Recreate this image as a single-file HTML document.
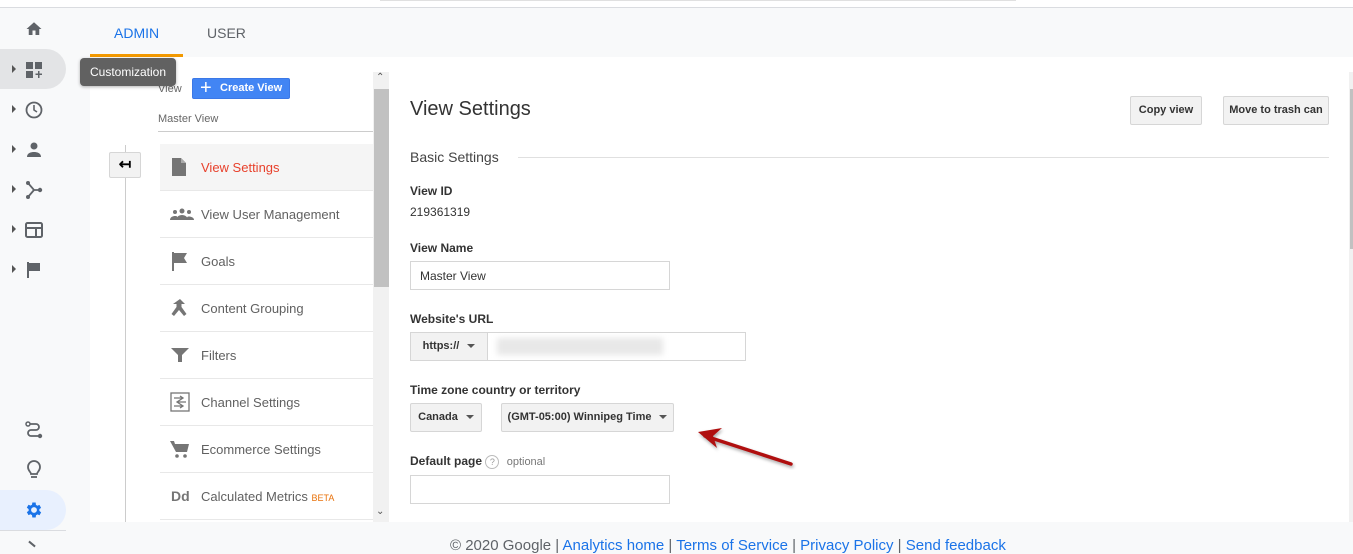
<!DOCTYPE html>
<html><head><meta charset="utf-8"><style>
*{box-sizing:border-box;margin:0;padding:0}
body{width:1353px;height:551px;overflow:hidden;background:#f8f9fa;font-family:"Liberation Sans",Arial,sans-serif;position:relative;color:#333}
.a{position:absolute}
.item{position:absolute;left:160px;width:213px;height:47px;border-bottom:1px solid #e8e8e8;font-size:13px;color:#616161}
.item span{position:absolute;left:41px;top:16px}
.item svg{position:absolute;left:10px;top:13px}
.lbl{position:absolute;left:410px;font-size:12px;font-weight:bold;color:#333}
.inp{position:absolute;background:#fff;border:1px solid #d6d6d6}
.btn{position:absolute;background:#f2f2f2;border:1px solid #d6d6d6;border-radius:2px;font-size:11px;font-weight:bold;color:#333;text-align:center}
.dd{display:inline-block;width:0;height:0;border-left:4px solid transparent;border-right:4px solid transparent;border-top:4px solid #555;vertical-align:middle;margin-left:8px}
.tri{position:absolute;left:12px;width:0;height:0;border-top:4px solid transparent;border-bottom:4px solid transparent;border-left:4px solid #555}
.ic{position:absolute;left:24px}
</style></head><body>
<div class="a" style="left:0;top:0;width:1353px;height:8px;background:#fff;border-bottom:1px solid #dadce0"></div>
<div class="a" style="left:380px;top:0;width:636px;height:1px;background:#e0e0e0"></div>

<div class="a" style="left:0;top:49px;width:66px;height:40px;background:#e3e4e6;border-radius:0 20px 20px 0"></div>
<div class="a" style="left:0;top:490px;width:66px;height:40px;background:#e8f0fe;border-radius:0 20px 20px 0"></div>
<div class="a" style="left:0;top:530px;width:66px;height:1px;background:#dadce0"></div>
<svg class="ic" style="top:20px" width="20" height="18" viewBox="0 0 24 24"><path d="M10 20v-6h4v6h5v-8h3L12 3 2 12h3v8z" fill="#5f6368"/></svg>
<div class="tri" style="top:65px"></div>
<svg class="ic" style="top:60px" width="20" height="20" viewBox="0 0 20 20" fill="#5f6368"><rect x="2" y="2" width="7" height="7"/><rect x="11" y="2" width="7" height="7"/><rect x="2" y="11" width="7" height="7"/><path d="M14 11h1.5v2.5H18V15h-2.5v3H14v-3h-2.5v-1.5H14z"/></svg>
<div class="tri" style="top:105px"></div>
<svg class="ic" style="top:100px" width="20" height="20" viewBox="0 0 20 20"><circle cx="10" cy="10" r="7.5" fill="none" stroke="#5f6368" stroke-width="1.8"/><path d="M10 5v5l3 2" fill="none" stroke="#5f6368" stroke-width="1.6"/></svg>
<div class="tri" style="top:145px"></div>
<svg class="ic" style="top:140px" width="20" height="20" viewBox="0 0 20 20" fill="#5f6368"><circle cx="10" cy="6" r="3.5"/><path d="M3 17c0-4 4-5 7-5s7 1 7 5z"/></svg>
<div class="tri" style="top:185px"></div>
<svg class="ic" style="top:180px" width="20" height="20" viewBox="0 0 20 20" fill="#5f6368"><circle cx="4" cy="3" r="2"/><circle cx="4" cy="17" r="2"/><circle cx="16" cy="10" r="2.2"/><path d="M4 3l6 7h6M10 10l-6 7" stroke="#5f6368" stroke-width="1.8" fill="none"/></svg>
<div class="tri" style="top:225px"></div>
<svg class="ic" style="top:220px" width="20" height="20" viewBox="0 0 20 20"><rect x="2" y="3" width="16" height="14" rx="1.5" fill="none" stroke="#5f6368" stroke-width="2"/><path d="M2 8h16M12 8v9" stroke="#5f6368" stroke-width="2"/></svg>
<div class="tri" style="top:265px"></div>
<svg class="ic" style="top:260px" width="20" height="20" viewBox="0 0 20 20" fill="#5f6368"><path d="M3 2h2v16H3zM5 3h11v8H5z"/></svg>
<svg class="ic" style="top:420px" width="20" height="20" viewBox="0 0 20 20"><circle cx="4" cy="4" r="2" fill="none" stroke="#5f6368" stroke-width="1.5"/><circle cx="16" cy="16" r="2.2" fill="#5f6368"/><path d="M6 4h6a3 3 0 0 1 0 6H7a3 3 0 0 0 0 6h7" fill="none" stroke="#5f6368" stroke-width="1.8"/></svg>
<svg class="ic" style="top:460px" width="20" height="20" viewBox="0 0 20 20"><path d="M7 14c0-2-3-3-3-7a6 6 0 0 1 12 0c0 4-3 5-3 7z" fill="none" stroke="#5f6368" stroke-width="1.8"/><path d="M7 17h6" stroke="#5f6368" stroke-width="1.8"/></svg>
<svg class="ic" style="top:500px" width="20" height="20" viewBox="0 0 24 24"><path fill="#1a73e8" d="M19.4 13a7.5 7.5 0 0 0 0-2l2.1-1.6-2-3.5-2.5 1a7 7 0 0 0-1.7-1L15 3h-4l-.4 2.7a7 7 0 0 0-1.7 1l-2.5-1-2 3.5L6.6 11a7.5 7.5 0 0 0 0 2l-2.2 1.6 2 3.5 2.5-1a7 7 0 0 0 1.7 1L11 21h4l.4-2.7a7 7 0 0 0 1.7-1l2.5 1 2-3.5zM13 15.5a3.5 3.5 0 1 1 0-7 3.5 3.5 0 0 1 0 7z" transform="translate(-1 0)"/></svg>
<div class="a" style="left:28px;top:543px;width:8px;height:2px;background:#5f6368;transform:rotate(40deg)"></div>

<div class="a" style="left:114px;top:25px;font-size:14px;color:#1a73e8">ADMIN</div>
<div class="a" style="left:90px;top:54px;width:93px;height:3px;background:#f29900"></div>
<div class="a" style="left:207px;top:25px;font-size:14px;color:#5f6368">USER</div>

<div class="a" style="left:90px;top:57px;width:1263px;height:465px;background:#fff"></div>
<div class="a" style="left:125px;top:145px;width:1px;height:377px;background:#ccc"></div>
<div class="a" style="left:109px;top:152px;width:32px;height:26px;background:#f2f2f2;border:1px solid #d6d6d6;border-radius:2px;text-align:center;font-size:15px;line-height:23px;color:#000;font-weight:bold">↤</div>
<div class="a" style="left:158px;top:83px;font-size:11px;color:#666">View</div>
<div class="a" style="left:192px;top:78px;width:98px;height:21px;background:#4285f4;border:1px solid #3b78e7;border-radius:2px;color:#fff;font-size:11px;font-weight:bold;line-height:19px"><span style="font-size:20px;font-weight:normal;position:absolute;left:7px;top:0px">+</span><span style="position:absolute;left:27px">Create View</span></div>
<div class="a" style="left:158px;top:113px;font-size:11px;color:#666">Master View</div>
<div class="a" style="left:158px;top:131px;width:215px;height:1px;background:#ccc"></div>

<div class="item" style="top:144px;background:#f5f5f5"><svg width="18" height="20" viewBox="0 0 18 20"><path d="M2 1h9l5 5v13H2z" fill="#757575"/><path d="M11 1v5h5" fill="#aaa"/></svg><span style="color:#e8412c">View Settings</span></div>
<div class="item" style="top:191px"><svg width="24" height="20" viewBox="0 0 24 20" fill="#757575"><circle cx="5" cy="8" r="2"/><circle cx="12" cy="7" r="2.5"/><circle cx="19" cy="8" r="2"/><path d="M0 16c0-3 3-4 5-4s2 .5 2 .5L7 16zM6 16c0-3 3-5 6-5s6 2 6 5zM17 16c0-3 0-3.5 2-3.5s5 1 5 3.5z"/></svg><span>View User Management</span></div>
<div class="item" style="top:238px"><svg width="20" height="20" viewBox="0 0 20 20" fill="#757575"><path d="M2 1h2v19H2zM4 2h13l-3 5 3 5H4z"/></svg><span>Goals</span></div>
<div class="item" style="top:285px"><svg width="20" height="20" viewBox="0 0 20 20" fill="#757575"><path d="M10 1l5 5h-3.5v3l5 7-2.5 2-5-6-5 6L1.5 16l5-7V6H3z"/></svg><span>Content Grouping</span></div>
<div class="item" style="top:332px"><svg width="20" height="20" viewBox="0 0 20 20" fill="#757575"><path d="M1 3h18l-7 7v7h-4v-7z"/></svg><span>Filters</span></div>
<div class="item" style="top:379px"><svg width="20" height="20" viewBox="0 0 20 20"><rect x="1" y="1" width="18" height="18" fill="none" stroke="#757575" stroke-width="1.3"/><path d="M4 6h9M10 4l3 2-3 2M16 10H7M10 8l-3 2 3 2M4 14h9M10 12l3 2-3 2" stroke="#757575" stroke-width="1.3" fill="none"/></svg><span>Channel Settings</span></div>
<div class="item" style="top:426px"><svg width="20" height="20" viewBox="0 0 20 20" fill="#757575"><path d="M0 2h4l1 3h14l-2 8H6z"/><circle cx="7" cy="17" r="1.8"/><circle cx="15" cy="17" r="1.8"/></svg><span>Ecommerce Settings</span></div>
<div class="item" style="top:473px"><b style="position:absolute;left:11px;top:15px;font-size:14px;color:#757575">Dd</b><span>Calculated Metrics <i style="font-style:normal;color:#e8710a;font-size:9px">BETA</i></span></div>

<div class="a" style="left:373px;top:72px;width:16px;height:450px;background:#f1f1f1"></div>
<div class="a" style="left:374px;top:89px;width:15px;height:198px;background:#c1c1c1"></div>
<div class="a" style="left:376px;top:72px;font-size:10px;color:#555">⌃</div>
<div class="a" style="left:376px;top:506px;font-size:10px;color:#555">⌄</div>
<div class="a" style="left:1349px;top:72px;width:4px;height:450px;background:#f1f1f1"></div>
<div class="a" style="left:1350px;top:89px;width:3px;height:160px;background:#c1c1c1"></div>

<div class="a" style="left:80px;top:58px;width:96px;height:28px;background:#616161;border-radius:4px;color:#fff;font-size:12px;line-height:28px;text-align:center;box-shadow:0 1px 3px rgba(0,0,0,.3)">Customization</div>

<div class="a" style="left:410px;top:98px;font-size:20px;color:#333">View Settings</div>
<div class="btn" style="left:1130px;top:96px;width:72px;height:29px;line-height:27px">Copy view</div>
<div class="btn" style="left:1223px;top:96px;width:106px;height:29px;line-height:27px">Move to trash can</div>
<div class="a" style="left:410px;top:149px;font-size:14px;color:#444">Basic Settings</div>
<div class="a" style="left:518px;top:157px;width:811px;height:1px;background:#e0e0e0"></div>
<div class="lbl" style="top:184px">View ID</div>
<div class="a" style="left:410px;top:205px;font-size:12px;color:#333">219361319</div>
<div class="lbl" style="top:241px">View Name</div>
<div class="inp" style="left:410px;top:261px;width:260px;height:29px;font-size:12px;padding:7px 9px">Master View</div>
<div class="lbl" style="top:312px">Website's URL</div>
<div class="inp" style="left:410px;top:332px;width:336px;height:29px"></div>
<div class="btn" style="left:410px;top:332px;width:78px;height:29px;line-height:27px;border-radius:0">https://<span class="dd"></span></div>
<div class="a" style="left:497px;top:338px;width:166px;height:17px;background:#e8e8e8;filter:blur(3px)"></div>
<div class="lbl" style="top:383px">Time zone country or territory</div>
<div class="btn" style="left:410px;top:403px;width:72px;height:29px;line-height:27px">Canada<span class="dd"></span></div>
<div class="btn" style="left:501px;top:403px;width:173px;height:29px;line-height:27px">(GMT-05:00) Winnipeg Time<span class="dd"></span></div>
<div class="lbl" style="top:454px">Default page <span style="display:inline-block;width:14px;height:14px;border:1px solid #bbb;border-radius:50%;font-size:9px;color:#999;text-align:center;line-height:12px;font-weight:normal;vertical-align:middle">?</span> <span style="font-weight:normal;color:#777;font-size:11px;margin-left:4px">optional</span></div>
<div class="inp" style="left:410px;top:475px;width:260px;height:29px"></div>

<svg class="a" style="left:690px;top:420px" width="110" height="50" viewBox="0 0 110 50"><g filter="drop-shadow(1px 2px 1.5px rgba(0,0,0,.35))"><path d="M101 44L15 16" stroke="#b00f0f" stroke-width="3.5" stroke-linecap="round"/><path d="M8 12l24-4-9 8 4 12z" fill="#b00f0f"/></g></svg>

<div class="a" style="left:450px;top:537px;font-size:15px;color:#5f6368;white-space:nowrap">© 2020 Google | <span style="color:#1a73e8">Analytics home</span> | <span style="color:#1a73e8">Terms of Service</span> | <span style="color:#1a73e8">Privacy Policy</span> | <span style="color:#1a73e8">Send feedback</span></div>
</body></html>
